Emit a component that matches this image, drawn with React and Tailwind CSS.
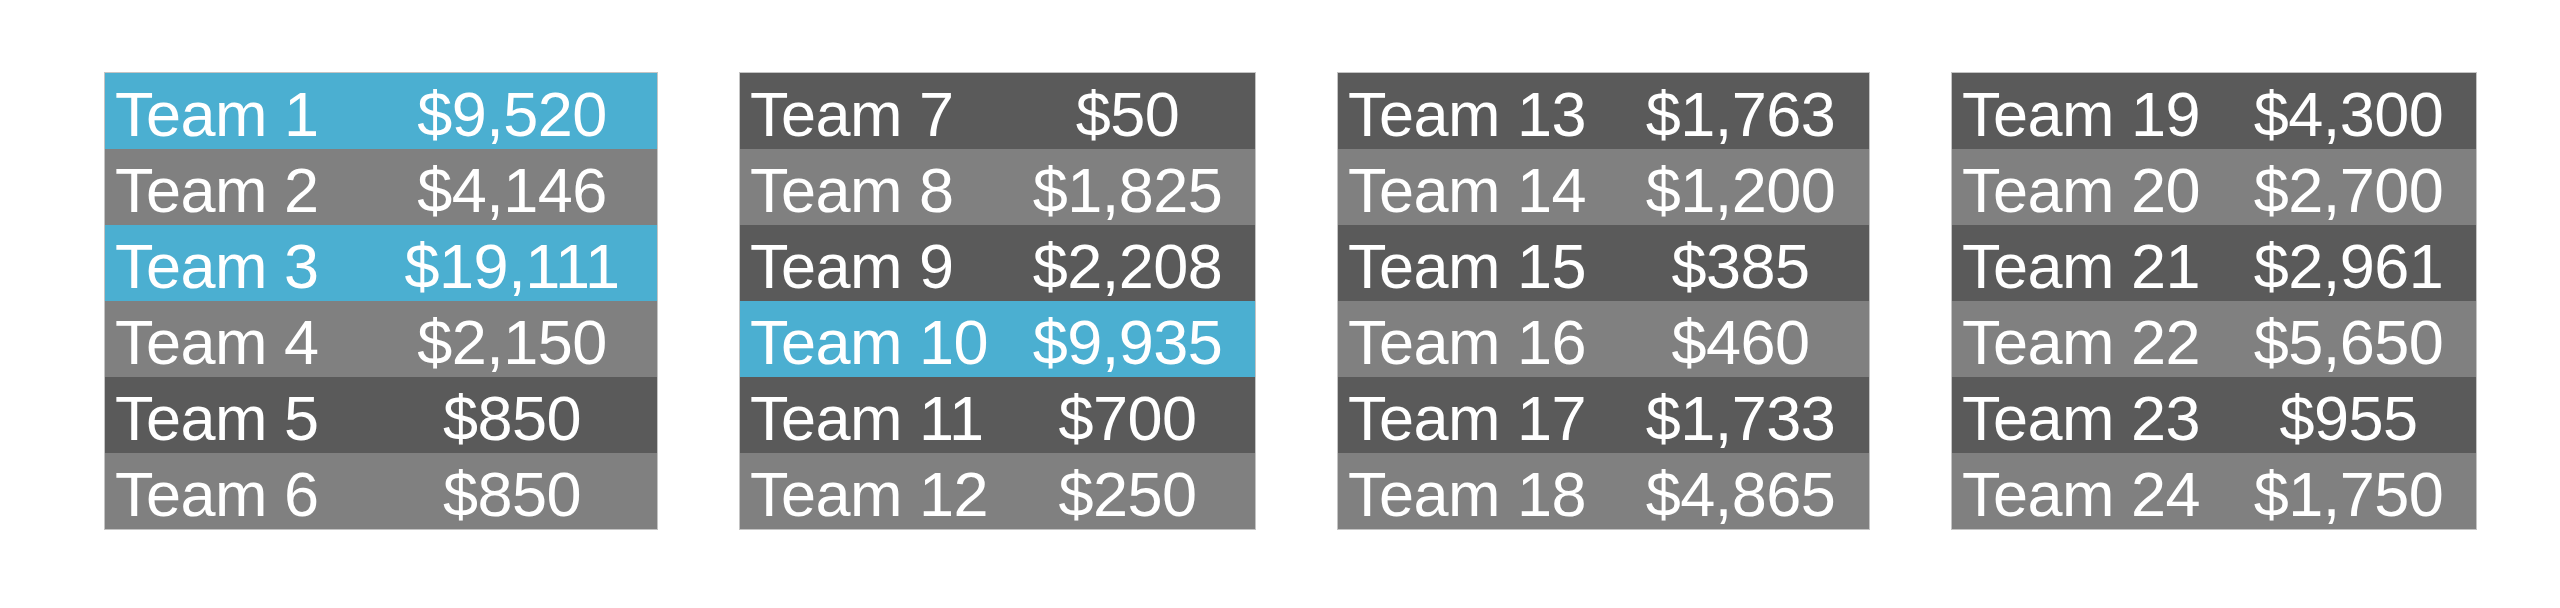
const BLUE = 'bg-[#4bafd1]';
const DARK = 'bg-[#5a5a5a]';
const LIGHT = 'bg-[#808080]';

const tables = [
  {
    cols: 'grid-cols-[262px_290px]',
    rows: [
      ['Team 1', '$9,520', BLUE],
      ['Team 2', '$4,146', LIGHT],
      ['Team 3', '$19,111', BLUE],
      ['Team 4', '$2,150', LIGHT],
      ['Team 5', '$850', DARK],
      ['Team 6', '$850', LIGHT],
    ],
  },
  {
    cols: 'grid-cols-[260px_255px]',
    rows: [
      ['Team 7', '$50', DARK],
      ['Team 8', '$1,825', LIGHT],
      ['Team 9', '$2,208', DARK],
      ['Team 10', '$9,935', BLUE],
      ['Team 11', '$700', DARK],
      ['Team 12', '$250', LIGHT],
    ],
  },
  {
    cols: 'grid-cols-[274px_257px]',
    rows: [
      ['Team 13', '$1,763', DARK],
      ['Team 14', '$1,200', LIGHT],
      ['Team 15', '$385', DARK],
      ['Team 16', '$460', LIGHT],
      ['Team 17', '$1,733', DARK],
      ['Team 18', '$4,865', LIGHT],
    ],
  },
  {
    cols: 'grid-cols-[269px_255px]',
    rows: [
      ['Team 19', '$4,300', DARK],
      ['Team 20', '$2,700', LIGHT],
      ['Team 21', '$2,961', DARK],
      ['Team 22', '$5,650', LIGHT],
      ['Team 23', '$955', DARK],
      ['Team 24', '$1,750', LIGHT],
    ],
  },
];

function TeamTable({ cols, rows }) {
  return (
    <div className="border border-[#c4c4c4]">
      {rows.map(([name, amount, bg]) => (
        <div key={name} className={`grid ${cols} h-[76px] ${bg}`}>
          <div className="flex items-end pl-[10px] pb-[3px] leading-none">{name}</div>
          <div className="flex items-end justify-center pb-[3px] leading-none">{amount}</div>
        </div>
      ))}
    </div>
  );
}

export default function App() {
  return (
    <main
      className="w-[2560px] h-[608px] bg-white text-white text-[63px] tracking-[-0.5px] pl-[104px] pt-[72px] flex items-start gap-[81px]"
      style={{ fontFamily: '"Liberation Sans", Arial, sans-serif' }}
    >
      {tables.map((t, i) => (
        <TeamTable key={i} cols={t.cols} rows={t.rows} />
      ))}
    </main>
  );
}
